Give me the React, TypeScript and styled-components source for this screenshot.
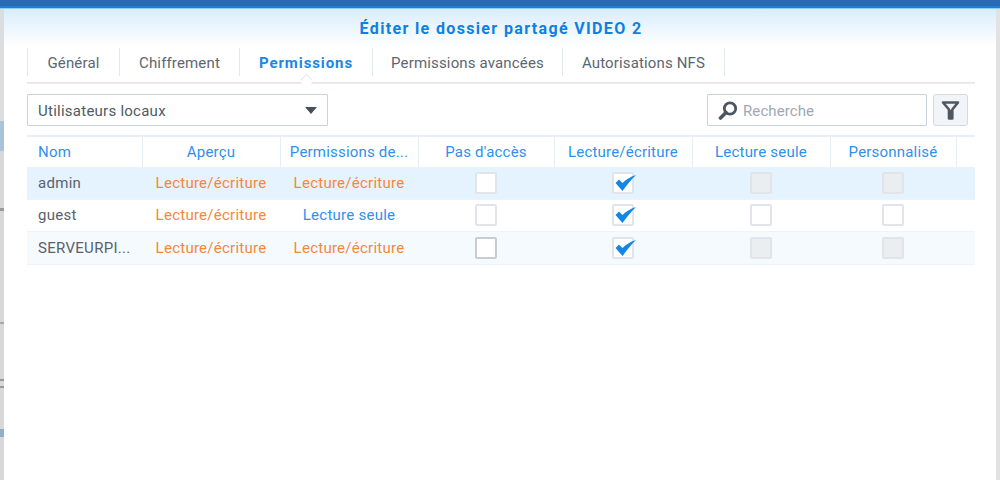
import styled, { createGlobalStyle } from "styled-components";

const GlobalStyle = createGlobalStyle`
  html, body {
    margin: 0;
    padding: 0;
    background: #fff;
  }
  body {
    font-family: Roboto, "Open Sans", "Liberation Sans", sans-serif;
    font-size: 15px;
  }
`;

const Page = styled.div`
  width: 1000px;
  height: 480px;
  display: flex;
  flex-direction: column;
  overflow: hidden;
`;

const TopBar = styled.div`
  height: 9px;
  flex: none;
  background: linear-gradient(#2a69b4 0, #2a69b4 6px, #1a80dc 6px, #1a80dc 8px, #8fcdf5 8px);
`;

const Desktop = styled.div`
  flex: 1;
  display: flex;
  min-height: 0;
`;

const Backdrop = styled.div<{ $side: "left" | "right" }>`
  width: 4px;
  flex: none;
  background: ${({ $side }) =>
    $side === "left"
      ? `linear-gradient(
          #dcdddf 0, #dcdddf 112px,
          #a9c3da 112px, #a9c3da 142px,
          #d8d8d8 142px, #d8d8d8 199px,
          #9a9a9a 199px, #9a9a9a 202px,
          #d8d8d8 202px, #d8d8d8 313px,
          #a8a8a8 313px, #a8a8a8 315px,
          #d8d8d8 315px, #d8d8d8 370px,
          #999 370px, #999 372px,
          #d8d8d8 372px, #d8d8d8 377px,
          #999 377px, #999 379px,
          #d8d8d8 379px, #d8d8d8 420px,
          #8fb0c8 420px, #8fb0c8 428px,
          #d8d8d8 428px
        )`
      : "#e2e2e2"};
`;

const Dialog = styled.div`
  flex: 1;
  display: flex;
  flex-direction: column;
  padding: 0 21px 0 23px;
  background: linear-gradient(#d9edfd 0, #fff 38px);
`;

const Title = styled.h1`
  margin: 0;
  height: 39px;
  flex: none;
  display: flex;
  align-items: center;
  justify-content: center;
  font-size: 16px;
  font-weight: 700;
  letter-spacing: 1.35px;
  color: #0f7fe0;
`;

const Tabs = styled.div`
  height: 35px;
  flex: none;
  display: flex;
  align-items: flex-start;
  box-shadow: 0 1px 0 #eeeff0;
  border-bottom: 1px solid #e4e6e8;
  box-sizing: border-box;
  width: 948px;
  position: relative;
`;

const Tab = styled.div<{ $active?: boolean; $width: number }>`
  width: ${({ $width }) => $width}px;
  height: 28px;
  padding-top: 2px;
  box-sizing: border-box;
  display: flex;
  align-items: center;
  justify-content: center;
  border-right: 1px solid #e3e9ef;
  font-size: 15px;
  letter-spacing: ${({ $active }) => ($active ? "0.9px" : "0.15px")};
  font-weight: ${({ $active }) => ($active ? 700 : 400)};
  color: ${({ $active }) => ($active ? "#1a87e8" : "#5c6670")};
  &:first-child {
    border-left: 1px solid #e3e9ef;
  }
`;

const Notch = styled.span`
  position: absolute;
  left: 275px;
  top: 29px;
  width: 9px;
  height: 9px;
  background: #fff;
  transform: rotate(45deg);
  box-shadow: -1px -1px 0 #e6e8ea;
`;

const Toolbar = styled.div`
  width: 948px;
  height: 53px;
  flex: none;
  display: flex;
  align-items: flex-start;
  padding-top: 11px;
  box-sizing: border-box;
`;

const Select = styled.div`
  width: 301px;
  height: 32px;
  box-sizing: border-box;
  border: 1px solid #c9d2da;
  border-radius: 1px;
  display: flex;
  align-items: center;
  justify-content: space-between;
  padding: 2px 10px 0;
  font-size: 15px;
  letter-spacing: 0.25px;
  color: #4f5a64;
`;

const Caret = styled.span`
  width: 0;
  height: 0;
  margin-top: -2px;
  border-left: 6px solid transparent;
  border-right: 6px solid transparent;
  border-top: 7px solid #4a5058;
`;

const Search = styled.div`
  width: 220px;
  height: 32px;
  margin-left: auto;
  box-sizing: border-box;
  border: 1px solid #c9d2da;
  border-radius: 1px;
  display: flex;
  align-items: center;
  gap: 5px;
  padding: 1px 0 0 10px;
  font-size: 15px;
  letter-spacing: 0.1px;
  color: #a0a8b2;
`;

const FilterButton = styled.div`
  width: 35px;
  height: 32px;
  margin-left: 6px;
  margin-right: 7px;
  box-sizing: border-box;
  border: 1px solid #d3dae2;
  border-radius: 3px;
  background: #f1f5f9;
  display: flex;
  align-items: center;
  justify-content: center;
`;

const Table = styled.div`
  width: 948px;
  border-top: 2px solid #e8eef5;
  margin-top: -1px;
`;

const columns = "116px 138px 138px 136px 138px 138px 126px 18px";

const HeaderRow = styled.div`
  display: grid;
  grid-template-columns: ${columns};
  height: 30px;
`;

const HeaderCell = styled.div<{ $left?: boolean }>`
  display: flex;
  align-items: center;
  justify-content: ${({ $left }) => ($left ? "flex-start" : "center")};
  padding: ${({ $left }) => ($left ? "0 0 0 11px" : "0 1px 0 0")};
  border-right: 1px solid #e6eef6;
  box-sizing: border-box;
  font-size: 15px;
  letter-spacing: 0.2px;
  color: #2f8ff0;
  white-space: nowrap;
  &:last-child {
    border-right: none;
  }
`;

const Row = styled.div<{ $bg: string }>`
  display: grid;
  grid-template-columns: ${columns};
  height: 32.5px;
  box-sizing: border-box;
  background: ${({ $bg }) => $bg};
  border-bottom: 1px solid #eef3f8;
`;

const NameCell = styled.div`
  display: flex;
  align-items: center;
  padding-left: 11px;
  font-size: 15px;
  letter-spacing: 0.3px;
  color: #59626c;
  white-space: nowrap;
`;

const PermCell = styled.div<{ $tone: "write" | "read" }>`
  display: flex;
  align-items: center;
  justify-content: center;
  padding-right: 2px;
  font-size: 15px;
  letter-spacing: 0.25px;
  white-space: nowrap;
  color: ${({ $tone }) => ($tone === "write" ? "#f5873a" : "#2f8ff0")};
`;

const BoxCell = styled.div`
  display: flex;
  align-items: center;
  justify-content: center;
  padding-right: 2px;
`;

const Box = styled.span<{ $state: "empty" | "disabled" | "focus" }>`
  position: relative;
  width: 22px;
  height: 22px;
  box-sizing: border-box;
  border-radius: 2px;
  border: 2px solid
    ${({ $state }) => ($state === "focus" ? "#c9cdd2" : "#e1e5ea")};
  background: ${({ $state }) => ($state === "disabled" ? "#ebeef1" : "#fff")};
`;

const Tick = styled.svg`
  position: absolute;
  left: 1px;
  top: 1px;
`;

const SearchIcon = () => (
  <svg width="20" height="19" viewBox="0 0 20 19" fill="none">
    <circle cx="12" cy="7.5" r="5.7" stroke="#4d5560" strokeWidth="2.8" />
    <path d="M8 11.5L2.5 17" stroke="#4d5560" strokeWidth="3.6" strokeLinecap="round" />
  </svg>
);

const FilterIcon = () => (
  <svg width="19" height="20" viewBox="0 0 19 20" fill="none">
    <path
      d="M2 2.5H17L11.3 9.5V18.5H8V9.5Z"
      stroke="#4f5862"
      strokeWidth="2.6"
      strokeLinejoin="round"
      fill="#f1f5f9"
    />
    <path d="M8.6 10H10.8V18.5H8.6Z" fill="#4f5862" />
  </svg>
);

type BoxState = "empty" | "disabled" | "focus" | "checked";

const CheckBox = ({ state }: { state: BoxState }) => (
  <BoxCell>
    <Box $state={state === "checked" ? "empty" : state}>
      {state === "checked" && (
        <Tick width="21" height="16" viewBox="0 0 21 16">
          <path d="M0.5 8L7.5 16C11 11 15.5 5.5 21 0C15 2 11 4.5 7.5 8L4 4.5Z" fill="#1287e6" />
        </Tick>
      )}
    </Box>
  </BoxCell>
);

const rows: {
  name: string;
  bg: string;
  preview: "write" | "read";
  perm: "write" | "read";
  boxes: BoxState[];
}[] = [
  { name: "admin", bg: "#e5f3fe", preview: "write", perm: "write", boxes: ["empty", "checked", "disabled", "disabled"] },
  { name: "guest", bg: "#fff", preview: "write", perm: "read", boxes: ["empty", "checked", "empty", "empty"] },
  { name: "SERVEURPI...", bg: "#f5fafe", preview: "write", perm: "write", boxes: ["focus", "checked", "disabled", "disabled"] },
];

const label = { write: "Lecture/écriture", read: "Lecture seule" };

const App = () => {
  return (
    <Page>
      <GlobalStyle />
      <TopBar />
      <Desktop>
        <Backdrop $side="left" />
        <Dialog>
          <Title>Éditer le dossier partagé VIDEO 2</Title>
          <Tabs>
            <Tab $width={93}>Général</Tab>
            <Tab $width={120}>Chiffrement</Tab>
            <Tab $width={133} $active>Permissions</Tab>
            <Tab $width={190}>Permissions avancées</Tab>
            <Tab $width={162}>Autorisations NFS</Tab>
            <Notch />
          </Tabs>
          <Toolbar>
            <Select>
              Utilisateurs locaux
              <Caret />
            </Select>
            <Search>
              <SearchIcon />
              Recherche
            </Search>
            <FilterButton>
              <FilterIcon />
            </FilterButton>
          </Toolbar>
          <Table>
            <HeaderRow>
              <HeaderCell $left>Nom</HeaderCell>
              <HeaderCell>Aperçu</HeaderCell>
              <HeaderCell>Permissions de...</HeaderCell>
              <HeaderCell>Pas d'accès</HeaderCell>
              <HeaderCell>Lecture/écriture</HeaderCell>
              <HeaderCell>Lecture seule</HeaderCell>
              <HeaderCell>Personnalisé</HeaderCell>
              <HeaderCell />
            </HeaderRow>
            {rows.map((row) => (
              <Row key={row.name} $bg={row.bg}>
                <NameCell>{row.name}</NameCell>
                <PermCell $tone={row.preview}>{label[row.preview]}</PermCell>
                <PermCell $tone={row.perm}>{label[row.perm]}</PermCell>
                {row.boxes.map((state, i) => (
                  <CheckBox key={i} state={state} />
                ))}
              </Row>
            ))}
          </Table>
        </Dialog>
        <Backdrop $side="right" />
      </Desktop>
    </Page>
  );
};

export default App;
